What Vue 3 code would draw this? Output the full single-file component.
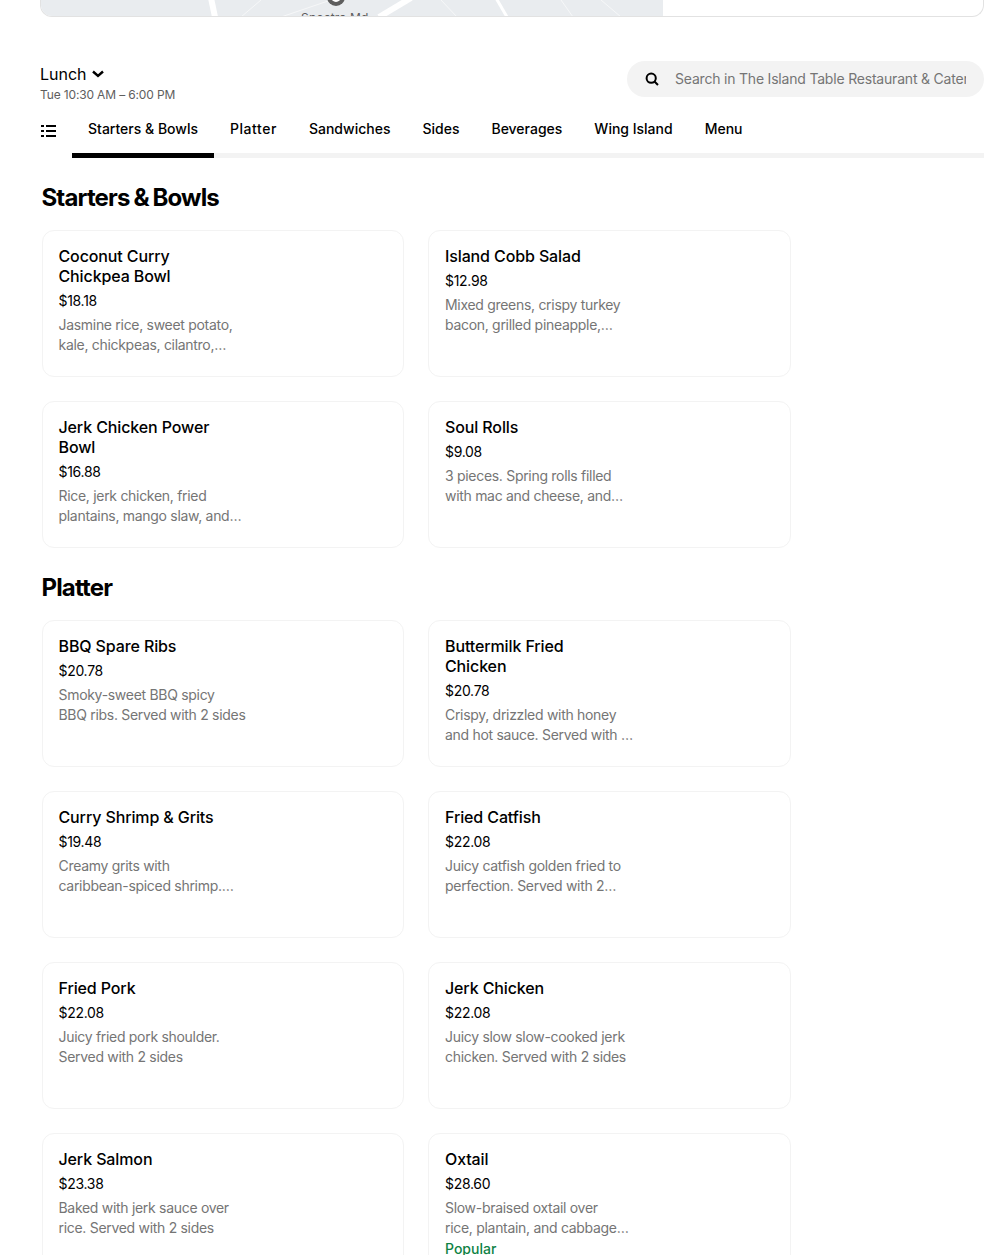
<template>
  <div class="page">
    <div class="store-card">
      <div class="map">
        <svg class="map-art" width="622" height="16" viewBox="0 0 622 16">
          <path d="M170 -2 L174 17" stroke="#fff" stroke-width="6" fill="none" />
          <path d="M338 17 L370 -2" stroke="#fff" stroke-width="6" fill="none" />
          <path d="M455 -2 L466 17" stroke="#fff" stroke-width="3" fill="none" />
          <path d="M240 17 L290 0 M200 17 L220 0 M400 0 L416 17 M520 0 L532 17 M560 0 L580 17" stroke="#f6f7f8" stroke-width="1" fill="none" />
          <circle cx="295" cy="-3" r="9" fill="#5e5e5e" />
          <circle cx="295" cy="-3" r="4" fill="none" stroke="#fff" stroke-width="2" />
        </svg>
        <span class="map-label">Spectra Md</span>
      </div>
    </div>

    <div class="menu-head">
      <div>
        <div class="menu-name">
          Lunch
          <svg width="12" height="8" viewBox="0 0 12 8"><path d="M1 1.5 L6 6 L11 1.5" stroke="#000" stroke-width="2.4" fill="none" /></svg>
        </div>
        <div class="menu-hours">Tue 10:30 AM – 6:00 PM</div>
      </div>
      <div class="search">
        <svg width="14" height="14" viewBox="0 0 14 14"><circle cx="6.2" cy="6.2" r="4.6" stroke="#000" stroke-width="2" fill="none" /><path d="M9.2 9.2 L13 13" stroke="#000" stroke-width="2" /></svg>
        <div class="search-text">Search in The Island Table Restaurant &amp; Catering</div>
      </div>
    </div>

    <div class="tabs-row">
      <svg class="list-icon" width="15" height="12" viewBox="0 0 15 12">
        <path d="M0 0h3v2H0zM5 0h10v2H5zM0 5h3v2H0zM5 5h10v2H5zM0 10h3v2H0zM5 10h10v2H5z" fill="#000" />
      </svg>
      <div class="tabs">
        <div v-for="(tab, i) in tabs" :key="tab" class="tab" :class="{ active: i === 0 }">{{ tab }}</div>
      </div>
    </div>

    <section v-for="section in sections" :key="section.title" class="section">
      <h2>{{ section.title }}</h2>
      <div class="grid">
        <div v-for="item in section.items" :key="item.name" class="card">
          <div class="card-body">
            <div class="name">{{ item.name }}</div>
            <div class="price">{{ item.price }}</div>
            <div class="desc">{{ item.desc }}</div>
            <div v-if="item.popular" class="popular">Popular</div>
          </div>
        </div>
      </div>
    </section>
  </div>
</template>

<script setup>
const tabs = ['Starters & Bowls', 'Platter', 'Sandwiches', 'Sides', 'Beverages', 'Wing Island', 'Menu']

const sections = [
  {
    title: 'Starters & Bowls',
    items: [
      { name: 'Coconut Curry Chickpea Bowl', price: '$18.18', desc: 'Jasmine rice, sweet potato,\nkale, chickpeas, cilantro,…' },
      { name: 'Island Cobb Salad', price: '$12.98', desc: 'Mixed greens, crispy turkey\nbacon, grilled pineapple,…' },
      { name: 'Jerk Chicken Power Bowl', price: '$16.88', desc: 'Rice, jerk chicken, fried\nplantains, mango slaw, and…' },
      { name: 'Soul Rolls', price: '$9.08', desc: '3 pieces. Spring rolls filled\nwith mac and cheese, and…' },
    ],
  },
  {
    title: 'Platter',
    items: [
      { name: 'BBQ Spare Ribs', price: '$20.78', desc: 'Smoky-sweet BBQ spicy\nBBQ ribs. Served with 2 sides' },
      { name: 'Buttermilk Fried Chicken', price: '$20.78', desc: 'Crispy, drizzled with honey\nand hot sauce. Served with …' },
      { name: 'Curry Shrimp & Grits', price: '$19.48', desc: 'Creamy grits with\ncaribbean-spiced shrimp.…' },
      { name: 'Fried Catfish', price: '$22.08', desc: 'Juicy catfish golden fried to\nperfection. Served with 2…' },
      { name: 'Fried Pork', price: '$22.08', desc: 'Juicy fried pork shoulder.\nServed with 2 sides' },
      { name: 'Jerk Chicken', price: '$22.08', desc: 'Juicy slow slow-cooked jerk\nchicken. Served with 2 sides' },
      { name: 'Jerk Salmon', price: '$23.38', desc: 'Baked with jerk sauce over\nrice. Served with 2 sides' },
      { name: 'Oxtail', price: '$28.60', desc: 'Slow-braised oxtail over\nrice, plantain, and cabbage…', popular: true },
    ],
  },
]
</script>

<style scoped>
.page {
  height: 1255px;
  overflow: hidden;
  padding: 0 20px 0 40px;
  font-family: "Inter", "Liberation Sans", sans-serif;
  color: #000;
}

.store-card {
  height: 17px;
  box-sizing: border-box;
  border: 1px solid #e2e2e2;
  border-top: none;
  border-radius: 0 0 12px 12px;
  overflow: hidden;
}

.map {
  position: relative;
  width: 622px;
  height: 16px;
  background: #e9ecef;
  overflow: hidden;
}

.map-art {
  position: absolute;
  top: 0;
  left: 0;
}

.map-label {
  position: absolute;
  top: 10px;
  left: 260px;
  font-size: 12px;
  letter-spacing: 0.2px;
  color: #5e5e5e;
  white-space: nowrap;
}

.menu-head {
  display: flex;
  justify-content: space-between;
  margin-top: 44px;
  height: 44px;
}

.menu-name {
  display: flex;
  align-items: center;
  gap: 5px;
  font-size: 16px;
  line-height: 26px;
}

.menu-hours {
  font-size: 12px;
  line-height: 16px;
  letter-spacing: -0.15px;
  color: #5e5e5e;
}

.search {
  display: flex;
  align-items: center;
  gap: 16px;
  width: 357px;
  height: 36px;
  padding: 0 18px;
  box-sizing: border-box;
  background: #f3f3f3;
  border-radius: 18px;
}

.search svg {
  flex-shrink: 0;
}

.search-text {
  overflow: hidden;
  padding-bottom: 2px;
  white-space: nowrap;
  font-size: 14px;
  letter-spacing: -0.2px;
  color: #757575;
}

.tabs-row {
  display: flex;
  align-items: flex-start;
  margin-top: 3px;
}

.list-icon {
  margin: 17px 16px 0 1px;
  flex-shrink: 0;
}

.tabs {
  display: flex;
  flex: 1;
  height: 45px;
  border-bottom: 5px solid #f3f3f3;
}

.tab {
  height: 50px;
  padding: 11px 16px 0;
  box-sizing: border-box;
  border-bottom: 5px solid transparent;
  font-size: 14px;
  font-weight: 500;
  line-height: 20px;
  white-space: nowrap;
}

.tab:nth-child(2) {
  letter-spacing: 0.55px;
}

.tab.active {
  border-bottom-color: #000;
}

.section {
  margin-left: 1.5px;
  width: 750px;
}

.section h2 {
  margin: 24px 0 16px;
  font-size: 24px;
  font-weight: 700;
  line-height: 32px;
  letter-spacing: -0.85px;
  word-spacing: -1px;
}

.grid {
  display: grid;
  grid-template-columns: 362.5px 362.5px;
  gap: 24px;
}

.card {
  height: 147px;
  box-sizing: border-box;
  border: 1px solid #f3f3f3;
  border-radius: 12px;
  padding: 15px 16px;
}

.card-body {
  width: 188px;
}

.name {
  padding-right: 8px;
  font-size: 16px;
  font-weight: 500;
  line-height: 20px;
  letter-spacing: -0.12px;
}

.price {
  margin-top: 5px;
  font-size: 14px;
  line-height: 20px;
  letter-spacing: -0.3px;
}

.desc {
  margin-top: 4px;
  font-size: 14px;
  line-height: 20px;
  letter-spacing: -0.3px;
  color: #757575;
  white-space: pre-line;
}

.popular {
  margin-top: 1px;
  font-size: 14px;
  font-weight: 500;
  line-height: 20px;
  color: #0e8345;
}
</style>
